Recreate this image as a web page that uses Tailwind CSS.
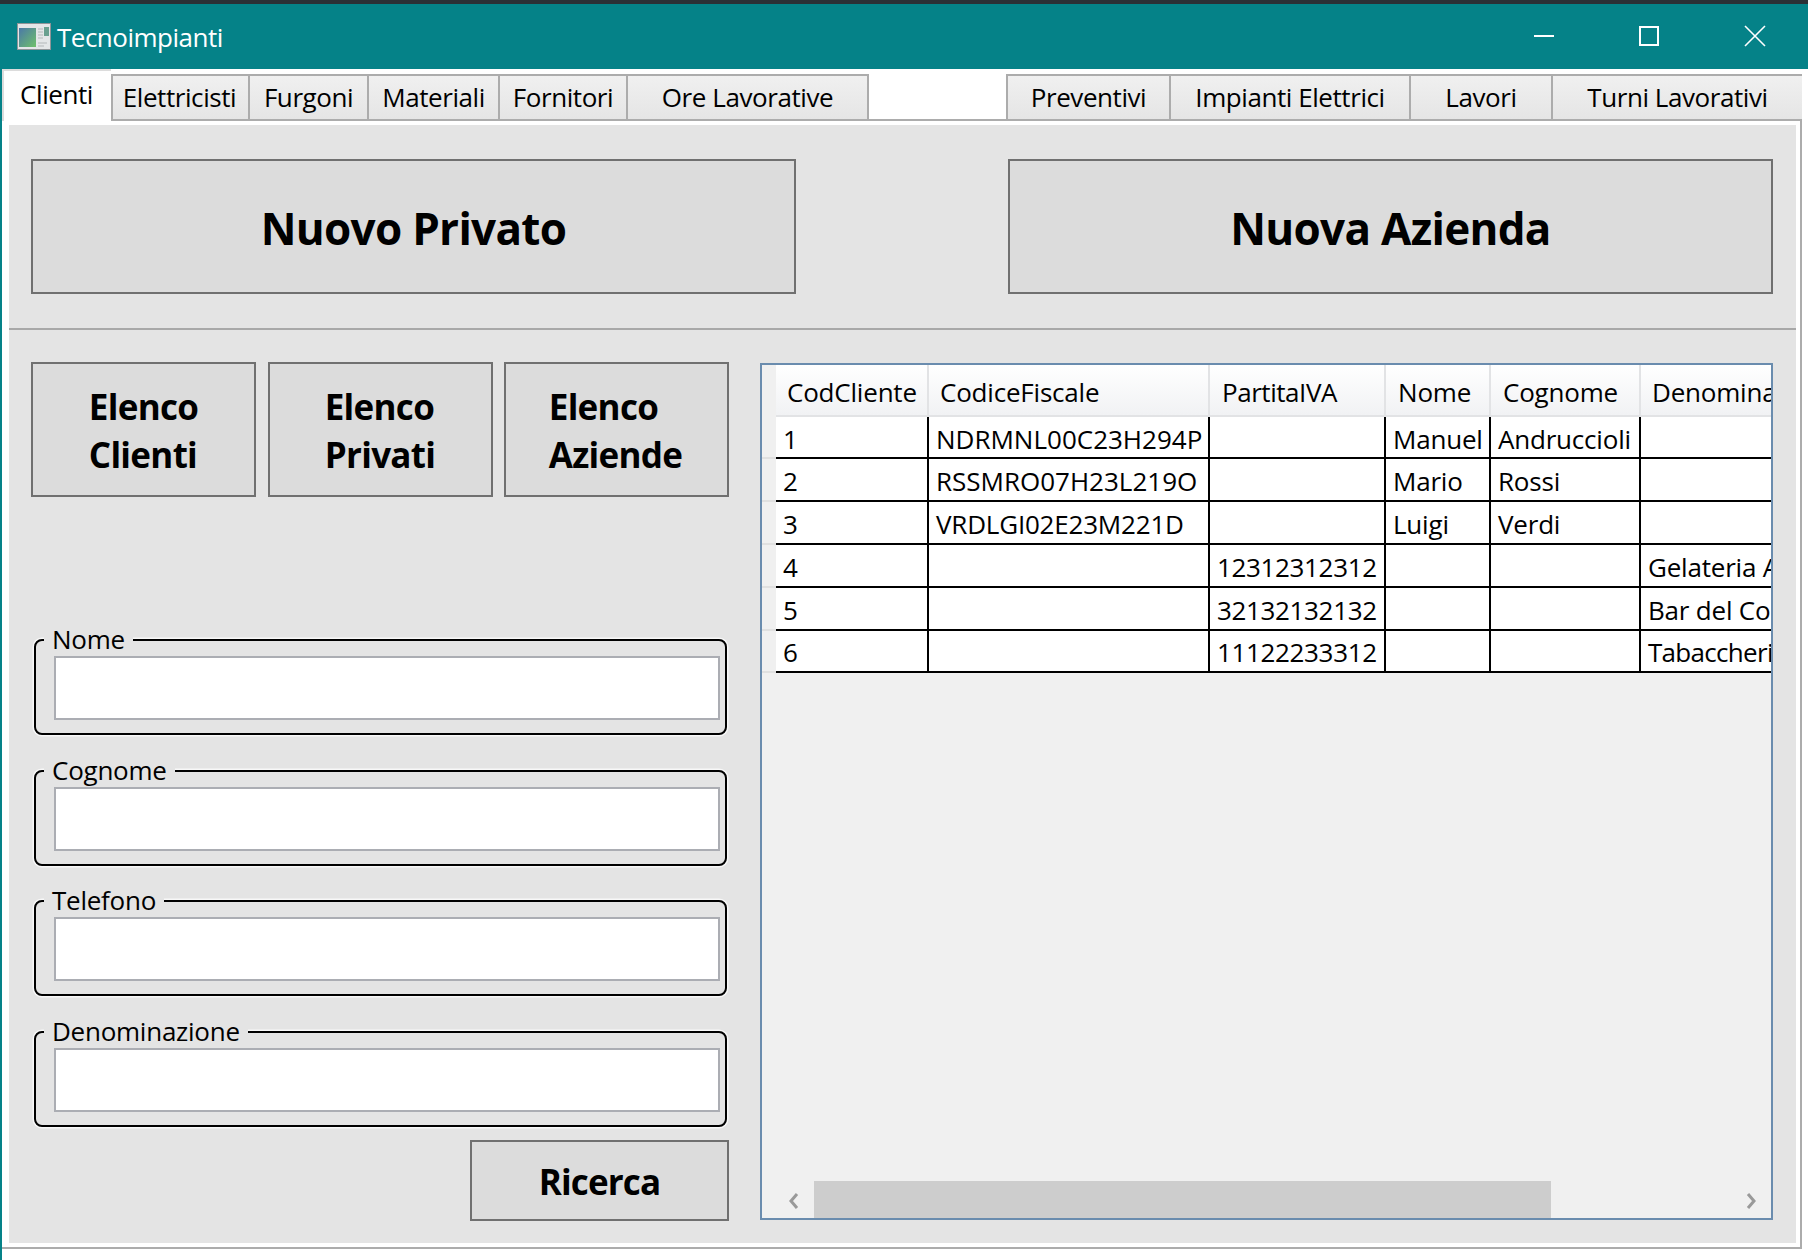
<!DOCTYPE html>
<html lang="it">
<head>
<meta charset="utf-8">
<title>Tecnoimpianti</title>
<script src="https://cdn.jsdelivr.net/npm/@tailwindcss/browser@4"></script>
</head>
<body class="w-[1808px] h-[1260px] overflow-hidden bg-white font-['Open_Sans',sans-serif] text-[26px] tracking-[-0.43px] text-black">
<div class="h-[4px] bg-[#2b3036]"></div>
<header class="h-[65px] bg-[#058288] flex items-center text-white">
  <svg class="ml-[17px] w-[34px] h-[27px]" viewBox="0 0 34 27">
    <defs><linearGradient id="pane" x1="0" y1="0" x2="1" y2="1"><stop offset="0" stop-color="#4a78a8"/><stop offset="1" stop-color="#6fc06a"/></linearGradient></defs>
    <rect x="0.5" y="0.5" width="33" height="26" fill="#e4e6e8" stroke="#8f9498"/>
    <rect x="2" y="5" width="17" height="19" fill="url(#pane)"/>
    <rect x="27" y="4" width="5" height="9" fill="#6aa090"/>
    <path d="M21 6h5M21 9h5M21 12h5M21 15h5M21 20h9M21 23h6" stroke="#b4b8ba" stroke-width="1.2"/>
  </svg>
  <span class="ml-[6px] pt-[1px] tracking-[-0.5px]">Tecnoimpianti</span>
  <div class="ml-auto flex h-full w-[317px] pr-[2px] pb-[2px]">
    <div class="w-[105px] flex items-center justify-center"><svg class="w-[22px] h-[22px]" viewBox="0 0 22 22"><path d="M1 11h20" stroke="white" stroke-width="2"/></svg></div>
    <div class="w-[105px] flex items-center justify-center"><svg class="w-[22px] h-[22px]" viewBox="0 0 22 22"><rect x="2" y="2" width="18" height="18" fill="none" stroke="white" stroke-width="2"/></svg></div>
    <div class="w-[105px] flex items-center justify-center pl-[2px]"><svg class="w-[22px] h-[22px]" viewBox="0 0 22 22"><path d="M1 1l20 20M21 1L1 21" stroke="white" stroke-width="1.6"/></svg></div>
  </div>
</header>
<div class="w-[1802px] h-[1191px] border-l-2 border-[#058288]">
  <nav class="h-[52px] border-b-2 border-[#acacac] flex items-end">
    <div class="w-[109px] h-[52px] -mb-[2px] border-t-2 border-l-2 border-[#dcdcdc] bg-white flex items-center justify-center pb-[3px] pr-[2px]">Clienti</div>
    <div class="w-[139px] h-[45px] pr-[2px] border-l-2 border-r-2 border-t-2 border-[#acacac] bg-linear-to-b from-[#f0f0f0] to-[#e5e5e5] flex items-center justify-center">Elettricisti</div>
    <div class="w-[119px] h-[45px] border-r-2 border-t-2 border-[#acacac] bg-linear-to-b from-[#f0f0f0] to-[#e5e5e5] flex items-center justify-center">Furgoni</div>
    <div class="w-[131px] h-[45px] border-r-2 border-t-2 border-[#acacac] bg-linear-to-b from-[#f0f0f0] to-[#e5e5e5] flex items-center justify-center">Materiali</div>
    <div class="w-[128px] h-[45px] border-r-2 border-t-2 border-[#acacac] bg-linear-to-b from-[#f0f0f0] to-[#e5e5e5] flex items-center justify-center">Fornitori</div>
    <div class="w-[241px] h-[45px] border-r-2 border-t-2 border-[#acacac] bg-linear-to-b from-[#f0f0f0] to-[#e5e5e5] flex items-center justify-center">Ore Lavorative</div>
    <div class="ml-[137px] w-[165px] h-[45px] border-l-2 border-r-2 border-t-2 border-[#acacac] bg-linear-to-b from-[#f0f0f0] to-[#e5e5e5] flex items-center justify-center">Preventivi</div>
    <div class="w-[240px] h-[45px] border-r-2 border-t-2 border-[#acacac] bg-linear-to-b from-[#f0f0f0] to-[#e5e5e5] flex items-center justify-center">Impianti Elettrici</div>
    <div class="w-[142px] h-[45px] border-r-2 border-t-2 border-[#acacac] bg-linear-to-b from-[#f0f0f0] to-[#e5e5e5] flex items-center justify-center">Lavori</div>
    <div class="w-[249px] h-[45px] border-t-2 border-[#acacac] bg-linear-to-b from-[#f0f0f0] to-[#e5e5e5] flex items-center justify-center">Turni Lavorativi</div>
  </nav>
  <div class="h-[1128px] border-b-2 border-r-2 border-[#acacac] pt-[4px] pb-[4px] pl-[7px] pr-[4px]">
    <main class="h-[1118px] bg-[#e4e4e4] flex flex-col">
      <section class="h-[205px] shrink-0 border-b-2 border-[#a8a8a8] flex justify-between pl-[22px] pr-[23px] pt-[34px]">
        <button class="w-[765px] h-[135px] pt-[3px] border-2 border-[#707070] bg-[#dcdcdc] font-bold text-[44px] tracking-[-0.7px]">Nuovo Privato</button>
        <button class="w-[765px] h-[135px] pt-[3px] border-2 border-[#707070] bg-[#dcdcdc] font-bold text-[44px] tracking-[-0.7px]">Nuova Azienda</button>
      </section>
      <section class="flex-1 flex pl-[22px] pr-[23px] pt-[32px] gap-[31px]">
        <div class="w-[698px] flex flex-col">
          <div class="flex justify-between">
            <button class="w-[225px] h-[135px] pt-[3px] border-2 border-[#707070] bg-[#dcdcdc] font-bold text-[35px] leading-[48px] tracking-[-0.7px]"><span class="inline-block text-left">Elenco<br>Clienti</span></button>
            <button class="w-[225px] h-[135px] pt-[3px] border-2 border-[#707070] bg-[#dcdcdc] font-bold text-[35px] leading-[48px] tracking-[-0.7px]"><span class="inline-block text-left">Elenco<br>Privati</span></button>
            <button class="w-[225px] h-[135px] pt-[3px] pr-[2px] border-2 border-[#707070] bg-[#dcdcdc] font-bold text-[35px] leading-[48px] tracking-[-0.7px]"><span class="inline-block text-left">Elenco<br>Aziende</span></button>
          </div>
          <fieldset class="mt-[128px] ml-[3px] w-[693px] h-[110px] border-2 border-black rounded-lg pl-[18px] pr-[5px] shadow-[0_0_0_1.5px_#f8f8f8]">
            <legend class="-ml-[10px] px-[8px] h-[30px] leading-[28px] tracking-[-0.25px] bg-[#e4e4e4]">Nome</legend>
            <input aria-label="Nome" class="block mt-[1px] w-full h-[64px] border-2 border-[#abadb3] bg-white">
          </fieldset>
          <fieldset class="mt-[21px] ml-[3px] w-[693px] h-[110px] border-2 border-black rounded-lg pl-[18px] pr-[5px] shadow-[0_0_0_1.5px_#f8f8f8]">
            <legend class="-ml-[10px] px-[8px] h-[30px] leading-[28px] tracking-[-0.25px] bg-[#e4e4e4]">Cognome</legend>
            <input aria-label="Cognome" class="block mt-[1px] w-full h-[64px] border-2 border-[#abadb3] bg-white">
          </fieldset>
          <fieldset class="mt-[20px] ml-[3px] w-[693px] h-[110px] border-2 border-black rounded-lg pl-[18px] pr-[5px] shadow-[0_0_0_1.5px_#f8f8f8]">
            <legend class="-ml-[10px] px-[8px] h-[30px] leading-[28px] tracking-[-0.25px] bg-[#e4e4e4]">Telefono</legend>
            <input aria-label="Telefono" class="block mt-[1px] w-full h-[64px] border-2 border-[#abadb3] bg-white">
          </fieldset>
          <fieldset class="mt-[21px] ml-[3px] w-[693px] h-[110px] border-2 border-black rounded-lg pl-[18px] pr-[5px] shadow-[0_0_0_1.5px_#f8f8f8]">
            <legend class="-ml-[10px] px-[8px] h-[30px] leading-[28px] tracking-[-0.25px] bg-[#e4e4e4]">Denominazione</legend>
            <input aria-label="Denominazione" class="block mt-[1px] w-full h-[64px] border-2 border-[#abadb3] bg-white">
          </fieldset>
          <button class="mt-[13px] self-end w-[259px] h-[81px] pt-[3px] border-2 border-[#707070] bg-[#dcdcdc] font-bold text-[35px] tracking-[-0.85px]">Ricerca</button>
        </div>
        <div class="w-[1013px] h-[857px] mt-[1px] border-2 border-[#6a8cae] bg-[#f0f0f0] flex flex-col overflow-hidden leading-[30px] tracking-[-0.2px]">
          <div class="h-[52px] shrink-0 grid grid-cols-[14px_153px_281px_176px_105px_150px_130px]">
            <div></div>
            <div class="pl-[11px] pt-[4px] flex items-center bg-linear-to-b from-white to-[#f1f2f4] border-r-2 border-b-2 border-[#e2e3e5] whitespace-nowrap">CodCliente</div>
            <div class="pl-[11px] pt-[4px] flex items-center bg-linear-to-b from-white to-[#f1f2f4] border-r-2 border-b-2 border-[#e2e3e5] whitespace-nowrap">CodiceFiscale</div>
            <div class="pl-[12px] pt-[4px] flex items-center bg-linear-to-b from-white to-[#f1f2f4] border-r-2 border-b-2 border-[#e2e3e5] whitespace-nowrap tracking-[-0.45px]">PartitaIVA</div>
            <div class="pl-[12px] pt-[4px] flex items-center bg-linear-to-b from-white to-[#f1f2f4] border-r-2 border-b-2 border-[#e2e3e5] whitespace-nowrap">Nome</div>
            <div class="pl-[12px] pt-[4px] flex items-center bg-linear-to-b from-white to-[#f1f2f4] border-r-2 border-b-2 border-[#e2e3e5] whitespace-nowrap">Cognome</div>
            <div class="pl-[11px] pt-[4px] flex items-center bg-linear-to-b from-white to-[#f1f2f4] border-b-2 border-[#e2e3e5] whitespace-nowrap overflow-hidden">Denominazione</div>
          </div>
          <div class="h-[42px] shrink-0 grid grid-cols-[14px_153px_281px_176px_105px_150px_130px]">
            <div class="border-b-2 border-[#e0e0e0]"></div>
            <div class="bg-white border-r-2 border-b-2 border-black pl-[7px] pt-[4px] flex items-center">1</div>
            <div class="bg-white border-r-2 border-b-2 border-black pl-[7px] pt-[4px] flex items-center whitespace-nowrap tracking-normal">NDRMNL00C23H294P</div>
            <div class="bg-white border-r-2 border-b-2 border-black pl-[7px] pt-[4px] flex items-center"></div>
            <div class="bg-white border-r-2 border-b-2 border-black pl-[7px] pt-[4px] flex items-center">Manuel</div>
            <div class="bg-white border-r-2 border-b-2 border-black pl-[7px] pt-[4px] flex items-center">Andruccioli</div>
            <div class="bg-white border-b-2 border-black pl-[7px] pt-[4px] flex items-center whitespace-nowrap overflow-hidden"></div>
          </div>
          <div class="h-[43px] shrink-0 grid grid-cols-[14px_153px_281px_176px_105px_150px_130px]">
            <div class="border-b-2 border-[#e0e0e0]"></div>
            <div class="bg-white border-r-2 border-b-2 border-black pl-[7px] pt-[2px] flex items-center">2</div>
            <div class="bg-white border-r-2 border-b-2 border-black pl-[7px] pt-[2px] flex items-center whitespace-nowrap tracking-normal">RSSMRO07H23L219O</div>
            <div class="bg-white border-r-2 border-b-2 border-black pl-[7px] pt-[2px] flex items-center"></div>
            <div class="bg-white border-r-2 border-b-2 border-black pl-[7px] pt-[2px] flex items-center">Mario</div>
            <div class="bg-white border-r-2 border-b-2 border-black pl-[7px] pt-[2px] flex items-center">Rossi</div>
            <div class="bg-white border-b-2 border-black pl-[7px] pt-[2px] flex items-center whitespace-nowrap overflow-hidden"></div>
          </div>
          <div class="h-[43px] shrink-0 grid grid-cols-[14px_153px_281px_176px_105px_150px_130px]">
            <div class="border-b-2 border-[#e0e0e0]"></div>
            <div class="bg-white border-r-2 border-b-2 border-black pl-[7px] pt-[2px] flex items-center">3</div>
            <div class="bg-white border-r-2 border-b-2 border-black pl-[7px] pt-[2px] flex items-center whitespace-nowrap tracking-[-0.2px]">VRDLGI02E23M221D</div>
            <div class="bg-white border-r-2 border-b-2 border-black pl-[7px] pt-[2px] flex items-center"></div>
            <div class="bg-white border-r-2 border-b-2 border-black pl-[7px] pt-[2px] flex items-center">Luigi</div>
            <div class="bg-white border-r-2 border-b-2 border-black pl-[7px] pt-[2px] flex items-center">Verdi</div>
            <div class="bg-white border-b-2 border-black pl-[7px] pt-[2px] flex items-center whitespace-nowrap overflow-hidden"></div>
          </div>
          <div class="h-[43px] shrink-0 grid grid-cols-[14px_153px_281px_176px_105px_150px_130px]">
            <div class="border-b-2 border-[#e0e0e0]"></div>
            <div class="bg-white border-r-2 border-b-2 border-black pl-[7px] pt-[2px] flex items-center">4</div>
            <div class="bg-white border-r-2 border-b-2 border-black pl-[7px] pt-[2px] flex items-center"></div>
            <div class="bg-white border-r-2 border-b-2 border-black pl-[7px] pt-[2px] flex items-center tracking-[-0.35px]">12312312312</div>
            <div class="bg-white border-r-2 border-b-2 border-black pl-[7px] pt-[2px] flex items-center"></div>
            <div class="bg-white border-r-2 border-b-2 border-black pl-[7px] pt-[2px] flex items-center"></div>
            <div class="bg-white border-b-2 border-black pl-[7px] pt-[2px] flex items-center whitespace-nowrap overflow-hidden">Gelateria A</div>
          </div>
          <div class="h-[43px] shrink-0 grid grid-cols-[14px_153px_281px_176px_105px_150px_130px]">
            <div class="border-b-2 border-[#e0e0e0]"></div>
            <div class="bg-white border-r-2 border-b-2 border-black pl-[7px] pt-[2px] flex items-center">5</div>
            <div class="bg-white border-r-2 border-b-2 border-black pl-[7px] pt-[2px] flex items-center"></div>
            <div class="bg-white border-r-2 border-b-2 border-black pl-[7px] pt-[2px] flex items-center tracking-[-0.35px]">32132132132</div>
            <div class="bg-white border-r-2 border-b-2 border-black pl-[7px] pt-[2px] flex items-center"></div>
            <div class="bg-white border-r-2 border-b-2 border-black pl-[7px] pt-[2px] flex items-center"></div>
            <div class="bg-white border-b-2 border-black pl-[7px] pt-[2px] flex items-center whitespace-nowrap overflow-hidden">Bar del Co</div>
          </div>
          <div class="h-[42px] shrink-0 grid grid-cols-[14px_153px_281px_176px_105px_150px_130px]">
            <div class="border-b-2 border-[#e0e0e0]"></div>
            <div class="bg-white border-r-2 border-b-2 border-black pl-[7px] pt-[2px] flex items-center">6</div>
            <div class="bg-white border-r-2 border-b-2 border-black pl-[7px] pt-[2px] flex items-center"></div>
            <div class="bg-white border-r-2 border-b-2 border-black pl-[7px] pt-[2px] flex items-center tracking-[-0.35px]">11122233312</div>
            <div class="bg-white border-r-2 border-b-2 border-black pl-[7px] pt-[2px] flex items-center"></div>
            <div class="bg-white border-r-2 border-b-2 border-black pl-[7px] pt-[2px] flex items-center"></div>
            <div class="bg-white border-b-2 border-black pl-[7px] pt-[2px] flex items-center whitespace-nowrap overflow-hidden tracking-[-0.7px]">Tabaccheria</div>
          </div>
          <div class="mt-auto h-[37px] flex">
            <div class="w-[52px] flex items-center pl-[26px] pt-[2px]"><svg class="w-[12px] h-[18px]" viewBox="0 0 12 18"><path d="M9 2L3 9l6 7" fill="none" stroke="#999999" stroke-width="3"/></svg></div>
            <div class="w-[737px] bg-[#cdcdcd]"></div>
            <div class="flex-1 flex items-center justify-end pr-[14px] pt-[2px]"><svg class="w-[12px] h-[18px]" viewBox="0 0 12 18"><path d="M3 2l6 7-6 7" fill="none" stroke="#999999" stroke-width="3"/></svg></div>
          </div>
        </div>
      </section>
    </main>
  </div>
</div>
</body>
</html>
